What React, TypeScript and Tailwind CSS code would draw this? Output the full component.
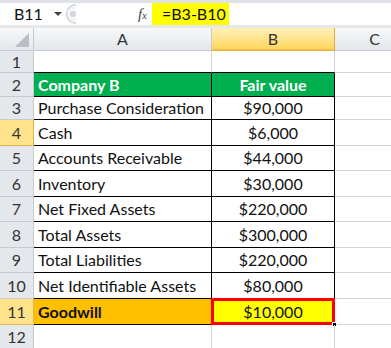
import React from 'react';

const font = { fontFamily: 'Lato, "Liberation Sans", sans-serif' };

type Row = {
    n: number;
    h: string;
    a?: string;
    b?: string;
    kind?: 'head' | 'data' | 'total';
    sel?: boolean;
};

const rows: Row[] = [
    { n: 1, h: 'h-[22px]' },
    { n: 2, h: 'h-[24px]', a: 'Company B', b: 'Fair value', kind: 'head' },
    { n: 3, h: 'h-[23px]', a: 'Purchase Consideration', b: '$90,000', kind: 'data' },
    { n: 4, h: 'h-[26px]', a: 'Cash', b: '$6,000', kind: 'data', sel: true },
    { n: 5, h: 'h-[25px]', a: 'Accounts Receivable', b: '$44,000', kind: 'data' },
    { n: 6, h: 'h-[26px]', a: 'Inventory', b: '$30,000', kind: 'data' },
    { n: 7, h: 'h-[25px]', a: 'Net Fixed Assets', b: '$220,000', kind: 'data' },
    { n: 8, h: 'h-[26px]', a: 'Total Assets', b: '$300,000', kind: 'data' },
    { n: 9, h: 'h-[25px]', a: 'Total Liabilities', b: '$220,000', kind: 'data' },
    { n: 10, h: 'h-[26px]', a: 'Net Identifiable Assets', b: '$80,000', kind: 'data' },
    { n: 11, h: 'h-[26px]', a: 'Goodwill', b: '$10,000', kind: 'total', sel: true },
    { n: 12, h: 'h-[25px]' },
];

const FormulaBar = () => (
    <div className="flex h-[25px] items-stretch border-t-[3px] border-[#dfe3e8] bg-white">
        {/* Name box */}
        <div className="flex w-[66px] shrink-0 items-center justify-between pl-[14px] pr-[2px] text-[16px] text-[#111]">
            <span>B11</span>
            <span className="mr-[2px] h-0 w-0 border-x-[4px] border-t-[4px] border-x-transparent border-t-[#444]" />
        </div>
        {/* splitter */}
        <div className="flex w-[10px] shrink-0 items-center">
            <div className="flex h-[20px] w-[10px] items-center rounded-l-full border-y border-l border-[#c3c8cf] bg-[#f4f5f7] pl-[3px]">
                <div className="h-[6px] w-[6px] rounded-full bg-[#d3d6da]" />
            </div>
        </div>
        <div className="flex w-[76px] shrink-0 items-center justify-end pr-[5px]">
            <span className="text-[15px] italic text-[#444]" style={{ fontFamily: '"Liberation Serif", serif' }}>
                f<span className="text-[11px]">x</span>
            </span>
        </div>
        <div className="flex w-[77px] shrink-0 items-center bg-[#ffff00] pl-[10px] text-[16px] text-[#111]">=B3-B10</div>
        <div className="flex-1" />
    </div>
);

const ColumnHeader = () => (
    <div className="flex h-[26px] border-t-[3px] border-[#e6e8ea] bg-gradient-to-b from-[#f7f8f9] to-[#e3e6ea] text-[16px] text-[#333]">
        <div className="relative w-[34px] shrink-0 border-r border-b border-[#c6cbd1]">
            <div
                className="absolute bottom-[3px] right-[4px] h-0 w-0"
                style={{ borderBottom: '14px solid #b9bec4', borderLeft: '14px solid transparent' }}
            />
        </div>
        <div className="flex w-[178px] shrink-0 items-center justify-center border-r border-b border-[#c6cbd1]">A</div>
        <div className="flex w-[123px] shrink-0 items-center justify-center border-r border-b-2 border-r-[#e2a64a] border-b-[#f2b94a] bg-gradient-to-b from-[#fff1b8] to-[#ffd55a]">
            B
        </div>
        <div className="flex w-[80px] shrink-0 items-center justify-center border-r border-b border-[#c6cbd1]">C</div>
    </div>
);

const GridRow = ({ r }: { r: Row }) => {
    const gridA = r.n === 1 ? 'border-b-black' : 'border-b-[#d4d4d4]';
    const inTable = r.kind !== undefined;
    const aBg =
        r.kind === 'head'
            ? 'bg-[#00b050] text-white font-bold'
            : r.kind === 'total'
              ? 'bg-[#ffc000] font-bold text-[#111]'
              : 'text-[#111]';
    const bBg =
        r.kind === 'head' ? 'bg-[#00b050] text-white font-bold' : r.kind === 'total' ? 'bg-[#ffff00] text-[#111]' : 'text-[#111]';
    return (
        <div className={`flex ${r.h} text-[16px]`}>
            <div
                className={`flex w-[34px] shrink-0 items-center justify-center border-r border-b text-[#333] ${
                    r.sel ? 'border-[#e2b24d] bg-[#ffe38a]' : 'border-[#c6cbd1] bg-[#e4e7eb]'
                }`}
            >
                {r.n}
            </div>
            <div
                className={`flex w-[178px] shrink-0 items-center border-b pl-[4px] ${aBg} ${
                    inTable ? 'border-r border-black' : `border-r border-r-[#d4d4d4] ${gridA}`
                }`}
            >
                {r.a}
            </div>
            <div
                className={`relative flex w-[123px] shrink-0 items-center justify-center border-b ${bBg} ${
                    inTable ? 'border-r border-black' : `border-r border-r-[#d4d4d4] ${gridA}`
                }`}
            >
                {r.b}
                {r.kind === 'total' && (
                    <>
                        <div className="absolute inset-[-1px] border-[3px] border-[#ff0000]" />
                        <div className="absolute bottom-[-3px] right-[-3px] h-[5px] w-[5px] border border-white bg-black" />
                    </>
                )}
            </div>
            <div className="w-[80px] shrink-0 border-r border-b border-[#d4d4d4]" />
        </div>
    );
};

export default function App() {
    return (
        <div className="h-[348px] w-[391px] overflow-hidden bg-white" style={font}>
            <FormulaBar />
            <ColumnHeader />
            {rows.map((r) => (
                <GridRow key={r.n} r={r} />
            ))}
        </div>
    );
}
